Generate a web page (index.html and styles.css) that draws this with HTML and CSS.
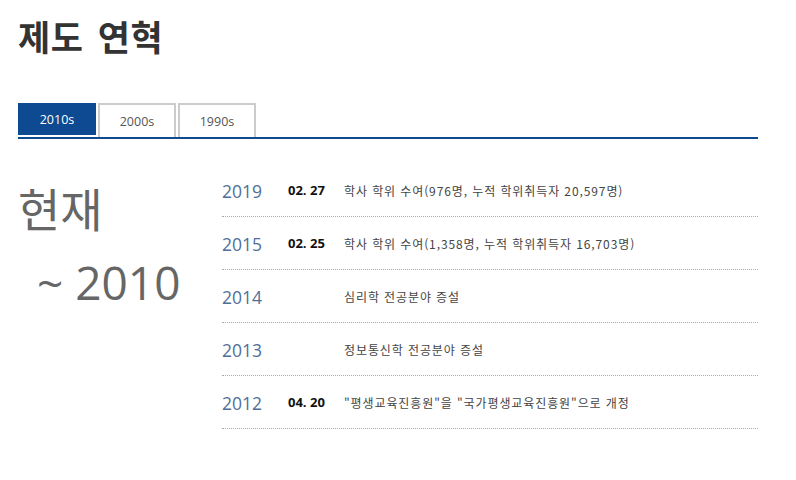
FILE: index.html
```html
<!DOCTYPE html>
<html lang="ko">
<head>
    <meta charset="utf-8">
    <title>제도 연혁</title>
    <link rel="stylesheet" href="styles.css">
</head>
<body>
    <div class="page">
        <h2 class="title">제도 연혁</h2>

        <ul class="tabs">
            <li class="tab active">2010s</li>
            <li class="tab">2000s</li>
            <li class="tab">1990s</li>
        </ul>

        <div class="history">
            <div class="period">
                <p class="period-now">현재</p>
                <p class="period-from">~ 2010</p>
            </div>
            <ul class="events">
                <li class="event">
                    <span class="year">2019</span>
                    <span class="date">02. 27</span>
                    <span class="desc">학사 학위 수여(976명, 누적 학위취득자 20,597명)</span>
                </li>
                <li class="event">
                    <span class="year">2015</span>
                    <span class="date">02. 25</span>
                    <span class="desc">학사 학위 수여(1,358명, 누적 학위취득자 16,703명)</span>
                </li>
                <li class="event">
                    <span class="year">2014</span>
                    <span class="date"></span>
                    <span class="desc">심리학 전공분야 증설</span>
                </li>
                <li class="event">
                    <span class="year">2013</span>
                    <span class="date"></span>
                    <span class="desc">정보통신학 전공분야 증설</span>
                </li>
                <li class="event">
                    <span class="year">2012</span>
                    <span class="date">04. 20</span>
                    <span class="desc">"평생교육진흥원"을 "국가평생교육진흥원"으로 개정</span>
                </li>
            </ul>
        </div>
    </div>
</body>
</html>
```

FILE: styles.css
```css
*
{
	margin: 0;
	padding: 0;
}
body
{
	background: #fff;
	font-family: "Open Sans", "Noto Sans CJK KR", sans-serif;
	color: #333;
}
.page
{
	width: 740px;
	padding: 12px 0 0 18px;
}
.title
{
	font-family: "Noto Sans CJK KR", sans-serif;
	font-size: 35px;
	font-weight: bold;
	color: #333;
	line-height: 48px;
	letter-spacing: 0.5px;
	word-spacing: 4px;
}

.tabs
{
	list-style: none;
	display: flex;
	gap: 2px;
	margin-top: 43px;
	border-bottom: 2px solid #0d4a92;
}
.tab
{
	width: 74px;
	height: 32px;
	border: 2px solid #ccc;
	border-bottom: none;
	display: flex;
	align-items: center;
	justify-content: center;
	font-size: 12.5px;
	color: #555;
}
.tab.active
{
	width: 78px;
	border: none;
	background: #0d4a92;
	color: #fff;
}

.history
{
	display: flex;
	margin-top: 25px;
}
.period
{
	width: 204px;
	color: #666;
}
.period-now
{
	font-family: "Noto Sans CJK KR", sans-serif;
	font-size: 46px;
	line-height: 56px;
	margin-top: 15px;
}
.period-from
{
	font-size: 46px;
	line-height: 60px;
	padding-left: 19px;
	margin-top: 17px;
}

.events
{
	list-style: none;
	flex: 1;
}
.event
{
	display: flex;
	align-items: center;
	height: 52px;
	border-bottom: 1px dotted #aaa;
}
.year
{
	width: 66px;
	padding-top: 2px;
	font-size: 17.5px;
	color: #4f6f98;
}
.date
{
	width: 56px;
	font-size: 13px;
	font-weight: bold;
	color: #111;
}
.desc
{
	font-family: "Noto Sans CJK KR", sans-serif;
	font-size: 12px;
	color: #444;
	letter-spacing: 0.9px;
}
```
